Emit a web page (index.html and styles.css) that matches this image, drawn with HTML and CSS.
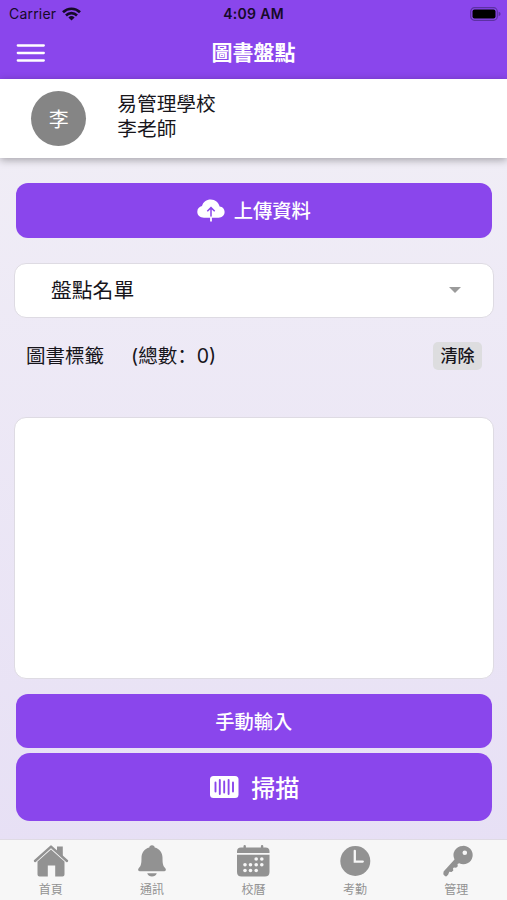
FILE: index.html
```html
<!DOCTYPE html>
<html lang="zh-Hant">
<head>
<meta charset="utf-8">
<meta name="viewport" content="width=device-width, initial-scale=1">
<title>圖書盤點</title>
<link rel="stylesheet" href="styles.css">
</head>
<body>
<div class="app">
  <header class="header">
    <div class="status">
      <div class="carrier"><span>Carrier</span>
        <svg width="19" height="14" viewBox="0 0 19 14" fill="none" stroke="#160a28" stroke-width="2.7"><path d="M1 5.200a12.200 12.200 0 0 1 17 0M4 8.400a8 8 0 0 1 11 0"/><path d="M9.500 13.600 6.400 10.500a4.500 4.500 0 0 1 6.200 0z" fill="#160a28" stroke="none"/></svg>
      </div>
      <time class="clock">4:09 AM</time>
      <svg class="battery" width="31" height="14" viewBox="0 0 31 14"><rect x=".7" y=".7" width="26.600" height="12.600" rx="3.800" fill="none" stroke="#5c31a3" stroke-width="1.200"/><rect x="2.500" y="2.500" width="23" height="9" rx="2" fill="#000"/><path d="M28.600 4.800q2 .6 2 2.200t-2 2.200z" fill="#5c31a3"/></svg>
    </div>
    <div class="titlebar">
      <svg class="menu" width="29" height="18" viewBox="0 0 29 18" stroke="#fff" stroke-width="2.300" stroke-linecap="round"><path d="M1.800 1.500h26M1.800 9h26M1.800 16.500h26"/></svg>
      <h1>圖書盤點</h1>
    </div>
  </header>
  <section class="user">
    <div class="avatar">李</div>
    <div class="names"><div>易管理學校</div><div>李老師</div></div>
  </section>
  <main class="content">
    <button class="btn upload">
      <svg width="28" height="23" viewBox="0 0 28 23"><path d="M7 18.700C3 18.700.3 16.300.3 12.800c0-3 2-5.200 4.700-5.700C6 3 9.500.5 13.700.5c4.600 0 7.900 2.900 8.900 6.900 3 .3 5 2.600 5 5.600 0 3.400-2.600 5.700-6 5.700z" fill="#fff"/><path d="M14 18.700V9M10.300 12.300 14 8.600l3.700 3.700" fill="none" stroke="#8a46ec" stroke-width="1.500"/><path d="M14 17.500v5" stroke="#fff" stroke-width="1.800"/></svg>
      <span>上傳資料</span>
    </button>
    <div class="select"><span>盤點名單</span><i class="caret"></i></div>
    <div class="tags"><span class="tags-label">圖書標籤</span><span class="count">(總數<span class="colon" lang="zh-Hans">：</span>0)</span><button class="clear">清除</button></div>
    <div class="list"></div>
    <button class="btn manual">手動輸入</button>
    <button class="btn scan">
      <svg width="29" height="22" viewBox="0 0 29 22"><rect width="28.500" height="22" rx="3.500" fill="#fff"/><path d="M5.500 6.500v9M9.800 4v14M14.200 5.500v11M18.600 4v14M23 6.500v9" stroke="#8a46ec" stroke-width="1.900" stroke-linecap="round"/></svg>
      <span>掃描</span>
    </button>
  </main>
  <nav class="tabs">
    <a class="tab"><svg width="36" height="34" viewBox="0 0 36 34"><path d="M2 17 18 2.600 34 17" fill="none" stroke="#929292" stroke-width="2.400" stroke-linecap="round" stroke-linejoin="round"/><path d="M24 2.500h5.800v10L24 7.300z"/><path d="M18 5.500 31.500 17.600V30.500q0 2-2 2h-7.300V21.500h-7.400v11H6.500q-2 0-2-2V17.600z"/></svg><span>首頁</span></a>
    <a class="tab"><svg width="36" height="34" viewBox="0 0 36 34"><path d="M18 1.200c1.800 0 2.500 1 2.700 2.200 5 1.200 7.800 5.300 7.800 10.200 0 6 .5 8.400 2.800 10.700 1.200 1.500.5 3-1.200 3H5.900c-1.700 0-2.400-1.500-1.200-3C7 22 7.500 19.600 7.500 13.600c0-4.900 2.800-9 7.800-10.200.2-1.200.9-2.200 2.700-2.200zM13.200 29.200h9.600c-.8 2.300-2.500 3.300-4.800 3.300s-4-1-4.800-3.300z"/></svg><span>通訊</span></a>
    <a class="tab"><svg width="36" height="34" viewBox="0 0 36 34"><path d="M6 3.500h2.500V2.300q0-1.200 1.200-1.200t1.200 1.200v1.200h15V2.300q0-1.200 1.200-1.200t1.200 1.200v1.200H30.500q4 0 4 4V9H2V7.500q0-4 4-4zM2 10.800h32.500V28q0 4.600-4.600 4.600H6.600Q2 32.600 2 28z"/><g fill="#f7f7f7"><circle cx="21.200" cy="15" r="1.800"/><circle cx="26.800" cy="15" r="1.800"/><circle cx="10" cy="20.700" r="1.800"/><circle cx="15.500" cy="20.700" r="1.800"/><circle cx="21.200" cy="20.700" r="1.800"/><circle cx="26.800" cy="20.700" r="1.800"/><circle cx="10" cy="26.500" r="1.800"/><circle cx="15.500" cy="26.500" r="1.800"/><circle cx="21.200" cy="26.500" r="1.800"/></g></svg><span>校曆</span></a>
    <a class="tab"><svg width="36" height="34" viewBox="0 0 36 34"><circle cx="18.300" cy="17" r="15"/><path d="M17.800 6.800v10.800h8" fill="none" stroke="#f7f7f7" stroke-width="2.300" stroke-linecap="round"/></svg><span>考勤</span></a>
    <a class="tab"><svg width="36" height="34" viewBox="0 0 36 34"><path fill-rule="evenodd" d="M24.500 1.900a9.200 9.200 0 1 1-3.300 17.300l-1.700.8.3 2.300-1.700 1.400-2.200-.2-.9.900.3 2.100-1.700 1.500-2.300-.3-1.200 3-1.900 1.700q-1.400.3-2.900-2.100l.3-2.900L16.500 15.400A9.200 9.200 0 0 1 24.500 1.900zM26.800 6.500a2.300 2.300 0 1 0 0 4.600 2.300 2.300 0 0 0 0-4.600z"/></svg><span>管理</span></a>
  </nav>
</div>
</body>
</html>
```

FILE: styles.css
```css
* { box-sizing: border-box; }
body {
  margin: 0;
  color: #17151b;
  font-family: Inter, "Noto Sans CJK TC", sans-serif;
}
button { border: 0; padding: 0; margin: 0; font: inherit; color: inherit; }
svg { display: block; flex: none; }
.app {
  height: 900px;
  display: flex;
  flex-direction: column;
  overflow: hidden;
  background: linear-gradient(#f0edf6 17%, #e7e0f5 94%);
}
.header { height: 79px; flex: none; background: #8a46ec; }
.status {
  height: 27px;
  padding: 0 6px 0 9px;
  display: grid;
  grid-template-columns: 1fr auto 1fr;
  align-items: center;
  font-size: 14px;
  color: #160a28;
}
.carrier { display: flex; align-items: center; gap: 6px; letter-spacing: .2px; }
.clock { margin-left: -3px; font-weight: 600; letter-spacing: .3px; }
.battery { justify-self: end; }
.titlebar {
  height: 52px;
  padding: 0 16px;
  display: grid;
  grid-template-columns: 1fr auto 1fr;
  align-items: center;
}
.titlebar h1 { margin: 0; font-size: 21px; line-height: 30px; font-weight: 700; color: #fff; }
.user {
  height: 79px;
  flex: none;
  padding-left: 31.300px;
  display: flex;
  align-items: center;
  gap: 31px;
  background: #fff;
  box-shadow: 0 2px 8px rgba(0, 0, 0, .32);
}
.avatar {
  width: 55px;
  height: 55px;
  border-radius: 50%;
  background: #858585;
  color: #fff;
  font-size: 20px;
  line-height: 58px;
  text-align: center;
}
.names { font-size: 19.700px; line-height: 25px; margin-top: -3px; }
.content { padding: 25px 13px 0 14px; flex: 1; display: flex; flex-direction: column; }
.btn {
  margin: 0 2px 0 1.500px;
  height: 54.500px;
  flex: none;
  display: flex;
  align-items: center;
  justify-content: center;
  border-radius: 12px;
  background: #8a46ec;
  color: #fff;
  font-size: 19.300px;
  font-weight: 500;
}
.upload { gap: 9px; }
.select {
  margin-top: 25px;
  height: 55.500px;
  flex: none;
  padding: 0 32px 0 36px;
  display: flex;
  align-items: center;
  justify-content: space-between;
  border: 1px solid #dedbe3;
  border-radius: 12px;
  background: #fff;
  font-size: 20.800px;
}
.select span { margin-top: -2px; }
.caret { border: 6px solid transparent; border-top-color: #9b9b9b; border-bottom: 0; }
.tags { height: 99px; flex: none; padding: 24px 12px 0; display: flex; align-items: flex-start; font-size: 19.500px; line-height: 28px; }
.count { margin-left: 27px; }
.colon { font-family: "Noto Sans CJK SC", sans-serif; line-height: 1; }
.clear { margin-left: auto; width: 49px; height: 28px; border-radius: 5px; background: #dddddf; font-size: 17px; line-height: 28px; font-weight: 500; }
.list { height: 262px; flex: none; border: 1px solid #dedbe3; border-radius: 12px; background: #fff; }
.manual { margin-top: 14.500px; }
.scan { margin-top: 5px; height: 68px; padding: 0 0 1px 2px; gap: 12px; border-radius: 14px; font-size: 24px; }
.tabs { height: 61px; flex: none; display: grid; grid-template-columns: repeat(5, 1fr); border-top: 1px solid #dfdbe4; background: #f7f7f7; }
.tab { display: flex; flex-direction: column; align-items: center; padding-top: 4px; fill: #929292; color: #929292; font-size: 12px; line-height: 18px; }
.tab span { margin-top: 3px; }
```
